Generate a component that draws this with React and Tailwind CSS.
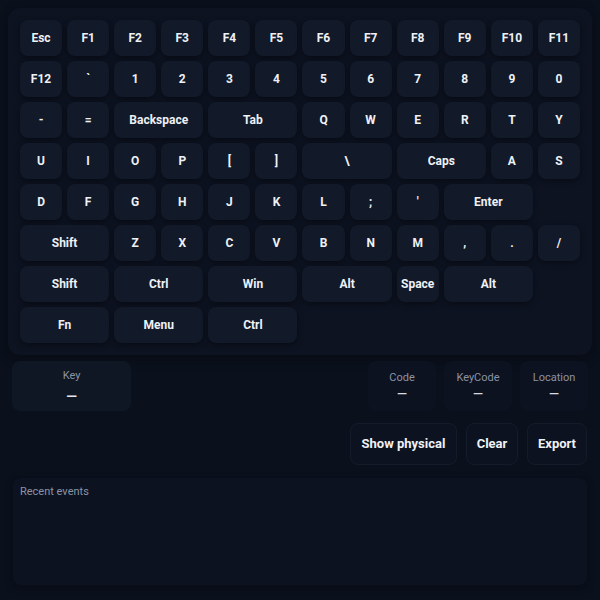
const rows = [
  [['Esc'], ['F1'], ['F2'], ['F3'], ['F4'], ['F5'], ['F6'], ['F7'], ['F8'], ['F9'], ['F10'], ['F11']],
  [['F12'], ['`'], ['1'], ['2'], ['3'], ['4'], ['5'], ['6'], ['7'], ['8'], ['9'], ['0']],
  [['-'], ['='], ['Backspace', 2], ['Tab', 2], ['Q'], ['W'], ['E'], ['R'], ['T'], ['Y']],
  [['U'], ['I'], ['O'], ['P'], ['['], [']'], ['\\', 2], ['Caps', 2], ['A'], ['S']],
  [['D'], ['F'], ['G'], ['H'], ['J'], ['K'], ['L'], [';'], ["'"], ['Enter', 2]],
  [['Shift', 2], ['Z'], ['X'], ['C'], ['V'], ['B'], ['N'], ['M'], [','], ['.'], ['/']],
  [['Shift', 2], ['Ctrl', 2], ['Win', 2], ['Alt', 2], ['Space'], ['Alt', 2]],
  [['Fn', 2], ['Menu', 2], ['Ctrl', 2]],
];

function Key({ label, span }) {
  return (
    <div
      className={`${span === 2 ? 'col-span-2' : ''} h-[36px] flex items-center justify-center rounded-lg bg-[#121929] shadow-[0_2px_6px_rgba(0,0,0,0.4)] text-[12px] font-bold text-[#eef1f6]`}
    >
      {label}
    </div>
  );
}

function Stat({ label }) {
  return (
    <div className="w-[68px] h-[50px] flex flex-col items-center justify-center rounded-lg bg-[#0c1220]">
      <span className="text-[11px] text-[#8b93a3] leading-4">{label}</span>
      <span className="text-[13px] font-semibold text-[#d6dbe4] leading-4">—</span>
    </div>
  );
}

export default function App() {
  return (
    <div
      className="w-[600px] h-[600px] bg-[#0a101c] p-2 flex flex-col"
      style={{ fontFamily: 'Roboto, "Liberation Sans", sans-serif' }}
    >
      {/* Keyboard */}
      <div className="rounded-xl bg-[#0d1321] p-3 shadow-[0_4px_12px_rgba(0,0,0,0.3)]">
        <div className="grid grid-cols-12 gap-[5px]">
          {rows.map((row, i) =>
            row.map(([label, span], j) => <Key key={`${i}-${j}`} label={label} span={span} />)
          )}
        </div>
      </div>

      {/* Key info */}
      <div className="mt-[6px] flex items-center justify-between px-[4px]">
        <div className="w-[119px] h-[50px] flex flex-col items-center justify-center rounded-lg bg-[#101724]">
          <span className="text-[11px] text-[#8b93a3] leading-4">Key</span>
          <span className="mt-[4px] text-[14px] font-semibold text-[#e5e9ef] leading-4">—</span>
        </div>
        <div className="flex gap-[8px]">
          <Stat label="Code" />
          <Stat label="KeyCode" />
          <Stat label="Location" />
        </div>
      </div>

      {/* Actions */}
      <div className="mt-[12px] flex justify-end gap-[9px] pr-[5px]">
        <button className="h-[42px] w-[107px] rounded-lg bg-[#0c1220] border border-[#141b2a] text-[13px] font-bold text-[#eef1f6]">
          Show physical
        </button>
        <button className="h-[42px] w-[52px] rounded-lg bg-[#0c1220] border border-[#141b2a] text-[13px] font-bold text-[#eef1f6]">
          Clear
        </button>
        <button className="h-[42px] w-[60px] rounded-lg bg-[#0c1220] border border-[#141b2a] text-[13px] font-bold text-[#eef1f6]">
          Export
        </button>
      </div>

      {/* Recent events */}
      <div className="mt-[13px] mx-[5px] h-[107px] rounded-lg bg-[#0c1220] px-[7px] py-[6px] shadow-[0_2px_8px_rgba(0,0,0,0.25)]">
        <div className="text-[11px] text-[#8b93a3]">Recent events</div>
      </div>
    </div>
  );
}
